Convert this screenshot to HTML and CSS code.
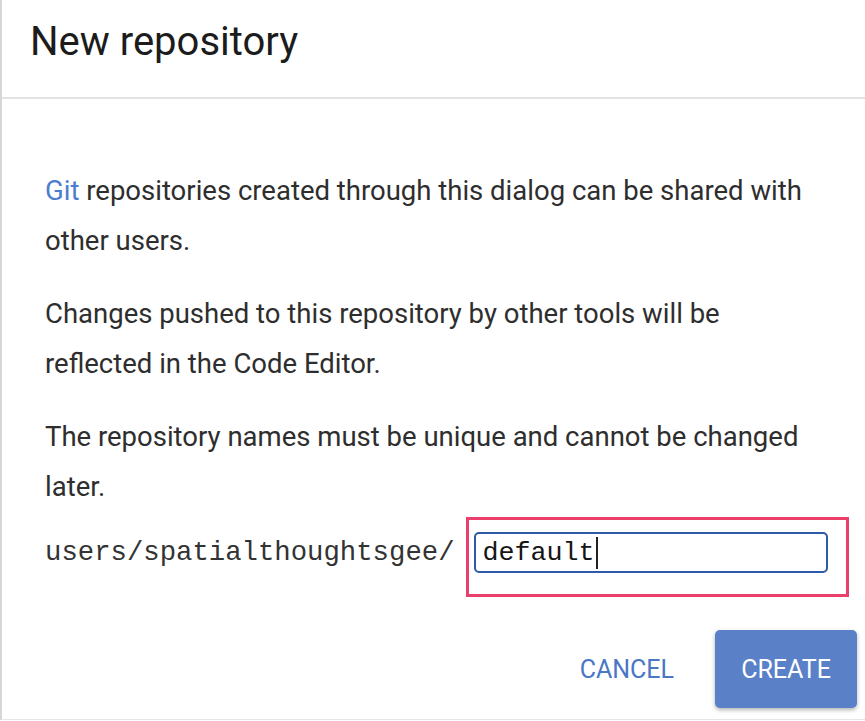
FILE: index.html
```html
<!DOCTYPE html>
<html lang="en">
<head>
<meta charset="utf-8">
<title>New repository</title>
<link rel="stylesheet" href="styles.css">
</head>
<body>
<div class="dialog">
  <div class="dialog-header">
    <h1 class="dialog-title">New repository</h1>
  </div>
  <div class="dialog-body">
    <p class="para"><a class="link" href="#">Git</a> repositories created through this dialog can be shared with other users.</p>
    <p class="para">Changes pushed to this repository by other tools will be reflected in the Code Editor.</p>
    <p class="para">The repository names must be unique and cannot be changed later.</p>
    <div class="name-row">
      <span class="prefix">users/spatialthoughtsgee/</span>
      <div class="highlight">
        <div class="name-input"><span class="value">default</span><span class="caret"></span></div>
      </div>
    </div>
  </div>
  <div class="dialog-actions">
    <button class="btn btn-text">CANCEL</button>
    <button class="btn btn-primary">CREATE</button>
  </div>
</div>
</body>
</html>
```

FILE: styles.css
```css
* { box-sizing: border-box; }

html, body {
  margin: 0;
  padding: 0;
  background: #ffffff;
}

body {
  font-family: Roboto, "Liberation Sans", Arial, sans-serif;
  color: #2b2b2b;
}

.dialog {
  width: 865px;
  height: 720px;
  border-left: 2px solid #d6d6d6;
  border-bottom: 1px solid #e6e6e6;
  display: flex;
  flex-direction: column;
}

.dialog-header {
  padding: 18px 28px 31px;
  border-bottom: 2px solid #e3e3e3;
}

.dialog-title {
  margin: 0;
  font-size: 40px;
  line-height: 48px;
  font-weight: 400;
  color: #1c1c1c;
}

.dialog-body {
  padding: 67px 40px 0 43px;
}

.para {
  margin: 0 0 23px;
  font-size: 27.5px;
  line-height: 50px;
  color: #2e2e2e;
}

.para:last-of-type {
  margin-bottom: 0;
}

.link {
  color: #4d7dcf;
  text-decoration: none;
}

.name-row {
  margin-top: 5px;
  display: flex;
  align-items: baseline;
}

.prefix {
  font-family: "Liberation Mono", "Courier New", monospace;
  font-size: 27.3px;
  color: #333333;
}

.highlight {
  margin-left: 11px;
  border: 3px solid #ea3f6b;
  padding: 12px 18px 21px 5px;
}

.name-input {
  width: 354px;
  height: 41px;
  border: 2px solid #2c5aa8;
  border-radius: 5px;
  padding-left: 7px;
  display: flex;
  align-items: center;
  font-family: "Liberation Mono", "Courier New", monospace;
  font-size: 26.7px;
  color: #151515;
}

.caret {
  display: inline-block;
  width: 2px;
  height: 32px;
  background: #222222;
  margin-left: 1px;
}

.dialog-actions {
  margin-top: 33px;
  display: flex;
  justify-content: flex-end;
  align-items: center;
  gap: 19px;
  padding-right: 8px;
}

.btn {
  font-family: Roboto, "Liberation Sans", Arial, sans-serif;
  font-size: 25px;
  border: none;
  background: none;
  cursor: pointer;
}

.btn-text {
  color: #4a76c6;
  padding: 0 22px;
  height: 78px;
}

.btn-primary {
  width: 142px;
  height: 78px;
  background: #5a80c8;
  color: #ffffff;
  border-radius: 5px;
  box-shadow: 0 2px 4px rgba(0, 0, 0, 0.3);
}
```
